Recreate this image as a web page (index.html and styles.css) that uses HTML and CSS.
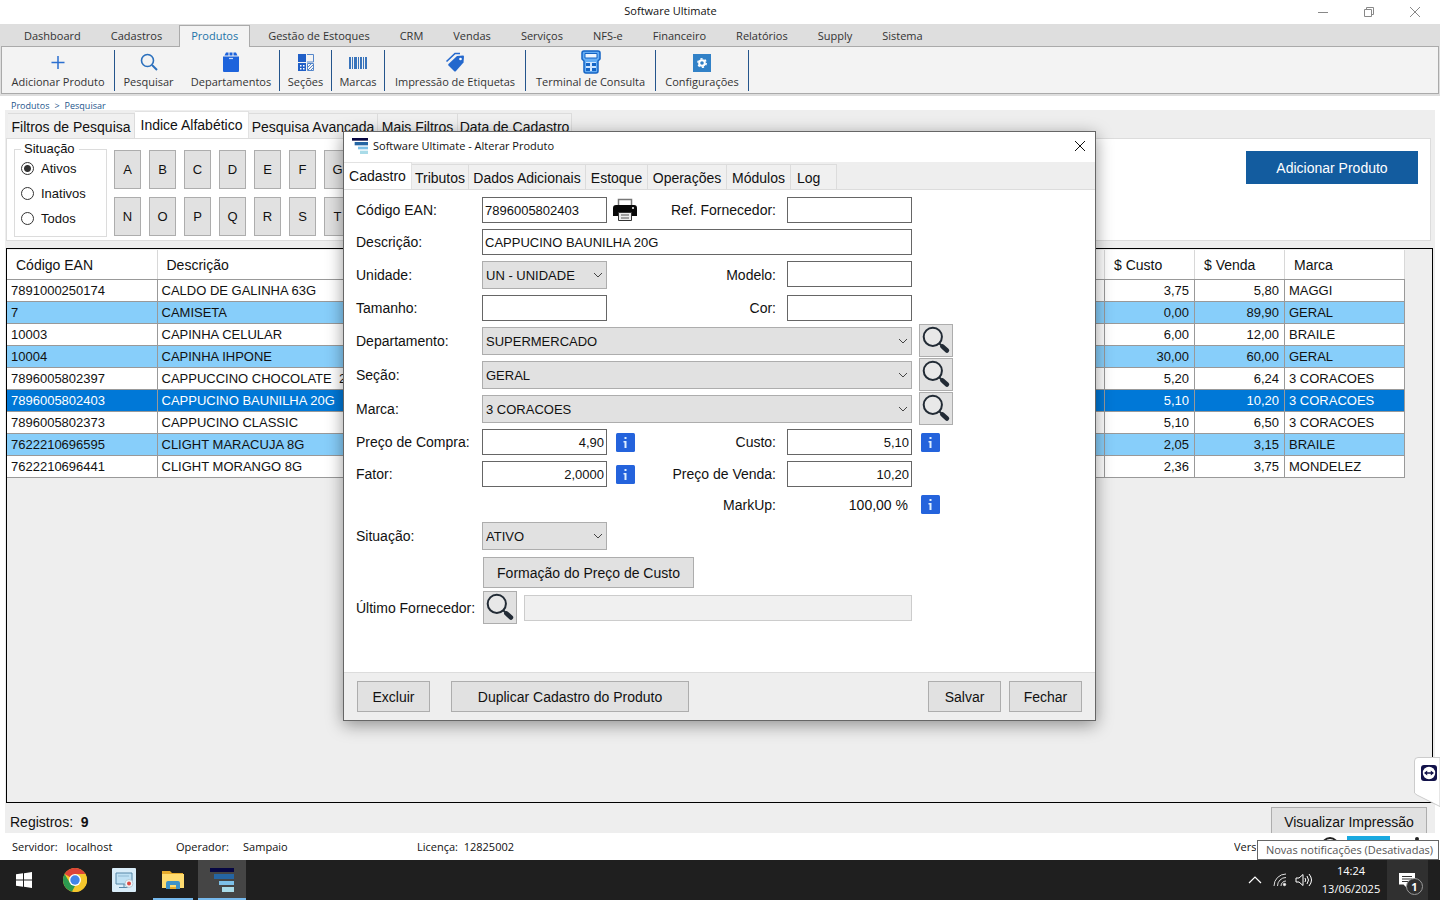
FILE: index.html
```html
<!DOCTYPE html>
<html lang="pt-BR">
<head>
<meta charset="utf-8">
<title>Software Ultimate</title>
<link rel="stylesheet" href="styles.css">
</head>
<body>
<svg class="defs" aria-hidden="true">
  <symbol id="logo" viewBox="0 0 24 24"><path fill="#060642" d="M0 0h24v4H0z"/><path fill="#2565a3" d="M4 6h20v5H4z"/><path fill="#7cc0e8" d="M9 13h15v4H9z"/><path fill="#a9dbe8" d="M12 19h12v5H12z"/></symbol>
  <symbol id="lens" viewBox="0 0 34 34"><circle cx="13.500" cy="13" r="10" fill="#e8e8e8" stroke="#222b35" stroke-width="2.200"/><path d="M20.500 20l2.500 2.500" stroke="#222b35" stroke-width="2"/><path d="M24 23.500l5 4.500" stroke="#222b35" stroke-width="5" stroke-linecap="round"/></symbol>
  <symbol id="info" viewBox="0 0 19 19"><rect width="19" height="19" rx="1.500" fill="#2463dc"/><path fill="#dff0ff" d="M8.500 4h2v2h-2zM7.500 8h3v7h-2V9.500h-1z"/></symbol>
  <symbol id="close" viewBox="0 0 12 12"><path d="M1 1l10 10M11 1L1 11" fill="none" stroke="currentColor"/></symbol>
</svg>
<header class="titlebar">
  <h1 class="app-title">Software Ultimate</h1>
  <div class="window-controls">
    <button aria-label="Minimizar"><svg width="12" height="12"><path d="M1 6.500h10" stroke="#888"/></svg></button>
    <button aria-label="Restaurar"><svg width="12" height="12" fill="none" stroke="#888"><path d="M1.500 3.500h7v7h-7zM3.500 3.500v-2h7v7h-2"/></svg></button>
    <button aria-label="Fechar janela"><svg width="12" height="12"><use href="#close"/></svg></button>
  </div>
</header>
<nav class="menu">
  <button>Dashboard</button><button>Cadastros</button><button class="active">Produtos</button><button>Gestão de Estoques</button><button>CRM</button><button>Vendas</button><button>Serviços</button><button>NFS-e</button><button>Financeiro</button><button>Relatórios</button><button>Supply</button><button>Sistema</button>
</nav>
<div class="ribbon-wrap">
<div class="ribbon">
  <button class="tool w-add sep"><svg viewBox="0 0 24 24"><path d="M12 6v13M5.500 12.500h13" stroke="#2b6fd0" stroke-width="1.500"/></svg>Adicionar Produto</button>
  <button class="tool w-search"><svg viewBox="0 0 24 24" fill="none" stroke="#2b70bd"><circle cx="10.500" cy="10.500" r="6" stroke-width="1.600"/><path d="M15 15l5 5" stroke-width="2"/></svg>Pesquisar</button>
  <button class="tool w-dept sep"><svg viewBox="0 0 24 24" fill="#1d63dc"><path d="M4 6.500h16v14.500a1 1 0 0 1-1 1H5a1 1 0 0 1-1-1zM5.500 5.500l1.500-3h2.500v3zM10.500 5.500v-3h3v3zM14.500 5.500v-3H17l1.500 3z"/><path d="M10 8.500h4" stroke="#c5dcff" stroke-width="1.200"/></svg>Departamentos</button>
  <button class="tool w-sec sep"><svg viewBox="0 0 24 24"><path fill="#205fc7" d="M4 4h8v8H4zM4 13h8v8H4z"/><path d="M6 15h1.500v1.500H6zM9 15h1.500v1.500H9zM6 18h1.500v1.500H6zM9 18h1.500v1.500H9z" fill="#fff"/><path d="M13 4.500h6.500V12H13M13.500 13.500h6v7h-6zM14 17l3-3M14 20l5-5M17 20l2-2" fill="none" stroke="#5486ca"/></svg>Seções</button>
  <button class="tool w-brand sep"><svg viewBox="0 0 24 24"><path fill="#3974bb" d="M3 7h2v12H3zM6 7h1v12H6zM8 7h3v12H8zM12 7h1v12h-1zM14 7h2v12h-2zM17 7h1v12h-1zM19 7h2v12h-2z"/></svg>Marcas</button>
  <button class="tool w-label sep"><svg viewBox="0 0 24 24"><path d="M3.500 11.500l8.500-8h5" fill="none" stroke="#2468cd" stroke-width="1.600"/><path fill="#2468cd" d="M5.500 14L14 6l6-.5q1 0 1 1l-.5 6L13 21q-1 1-2 0l-5.500-5.500q-.700-.700 0-1.500z"/><circle cx="17.500" cy="9" r="1.300" fill="#fff"/></svg>Impressão de Etiquetas</button>
  <button class="tool w-term sep"><svg viewBox="0 0 24 24"><path d="M5 1h14q2 0 2 2v6l-2 2v10q0 2-2 2H7q-2 0-2-2V11L3 9V3q0-2 2-2z" fill="#65adf4" stroke="#1464c5" stroke-width="1.500"/><path d="M6 3.500h12V8H6z" fill="#eef6ff" stroke="#1464c5"/><path d="M7 12h10v9H7z" fill="#cfe5ff"/><path fill="#1464c5" d="M7 13h4v3H7zM13 13h4v3h-4zM7 18h4v3H7zM13 18h4v3h-4z"/></svg>Terminal de Consulta</button>
  <button class="tool w-conf sep"><svg viewBox="0 0 24 24"><path fill="#3181c7" d="M3 4h18v18H3z"/><circle cx="12" cy="13" r="2.800" fill="none" stroke="#fff" stroke-width="2"/><circle cx="12" cy="13" r="4.200" fill="none" stroke="#fff" stroke-width="1.500" stroke-dasharray="2.200 2.200"/></svg>Configurações</button>
</div>
</div>
<nav class="crumb"><a href="#">Produtos</a> &gt; <a href="#">Pesquisar</a></nav>

<main class="page">
  <div class="tabs filter-tabs">
    <button>Filtros de Pesquisa</button><button class="active">Indice Alfabético</button><button>Pesquisa Avançada</button><button>Mais Filtros</button><button>Data de Cadastro</button>
  </div>
  <section class="filter">
    <fieldset class="status-set"><legend>Situação</legend>
      <label><input type="radio" name="sit" checked> Ativos</label>
      <label><input type="radio" name="sit"> Inativos</label>
      <label><input type="radio" name="sit"> Todos</label>
    </fieldset>
    <div class="letters">
      <button>A</button><button>B</button><button>C</button><button>D</button><button>E</button><button>F</button><button>G</button>
      <button>N</button><button>O</button><button>P</button><button>Q</button><button>R</button><button>S</button><button>T</button>
    </div>
    <button class="primary">Adicionar Produto</button>
  </section>
  <section class="grid-box">
    <table class="products">
      <colgroup><col class="c-ean"><col><col class="c-num"><col class="c-num"><col class="c-brand"></colgroup>
      <thead><tr><th>Código EAN</th><th>Descrição</th><th>$ Custo</th><th>$ Venda</th><th>Marca</th></tr></thead>
      <tbody>
        <tr><td>7891000250174</td><td>CALDO DE GALINHA 63G</td><td class="num">3,75</td><td class="num">5,80</td><td>MAGGI</td></tr>
        <tr><td>7</td><td>CAMISETA</td><td class="num">0,00</td><td class="num">89,90</td><td>GERAL</td></tr>
        <tr><td>10003</td><td>CAPINHA CELULAR</td><td class="num">6,00</td><td class="num">12,00</td><td>BRAILE</td></tr>
        <tr><td>10004</td><td>CAPINHA IHPONE</td><td class="num">30,00</td><td class="num">60,00</td><td>GERAL</td></tr>
        <tr><td>7896005802397</td><td>CAPPUCCINO CHOCOLATE&nbsp; 2</td><td class="num">5,20</td><td class="num">6,24</td><td>3 CORACOES</td></tr>
        <tr class="selected"><td>7896005802403</td><td>CAPPUCINO BAUNILHA 20G</td><td class="num">5,10</td><td class="num">10,20</td><td>3 CORACOES</td></tr>
        <tr><td>7896005802373</td><td>CAPPUCINO CLASSIC</td><td class="num">5,10</td><td class="num">6,50</td><td>3 CORACOES</td></tr>
        <tr><td>7622210696595</td><td>CLIGHT MARACUJA 8G</td><td class="num">2,05</td><td class="num">3,15</td><td>BRAILE</td></tr>
        <tr><td>7622210696441</td><td>CLIGHT MORANGO 8G</td><td class="num">2,36</td><td class="num">3,75</td><td>MONDELEZ</td></tr>
      </tbody>
    </table>
  </section>
  <footer class="page-foot"><span>Registros:&nbsp; <b>9</b></span><button class="btn preview">Visualizar Impressão</button></footer>
</main>

<div class="statusbar">
  <span class="s-server">Servidor:&nbsp;&nbsp; localhost</span><span class="s-oper">Operador:&nbsp;&nbsp;&nbsp;&nbsp; Sampaio</span><span>Licença:&nbsp; 12825002</span>
  <span class="s-right">Vers</span>
  <svg class="s-icons" width="110" height="26" aria-hidden="true"><circle cx="14" cy="12" r="8" fill="none" stroke="#222" stroke-width="2"/><path fill="#19a9e0" d="M31 2h43v20H31z"/><circle cx="101" cy="5" r="2" fill="#222"/></svg>
</div>

<footer class="taskbar">
  <button class="task" aria-label="Iniciar"><svg width="16" height="16" fill="#fff"><path d="M0 2.300L7 1.300v6.200H0zM8 1.200L16 0v7.500H8zM0 8.500h7v6.200L0 13.700zM8 8.500h8V16l-8-1.200z"/></svg></button>
  <button class="task" aria-label="Chrome"><svg width="24" height="24" viewBox="0 0 24 24"><circle cx="12" cy="12" r="12" fill="#f5c72c"/><path fill="#dc4437" d="M12 12L1.600 6A12 12 0 0 1 22.400 6H12z"/><path fill="#2c9a50" d="M1.600 6L7 15l5 3-3 5.600A12 12 0 0 1 1.600 6z"/><path fill="#f5c72c" d="M12 6h10.400A12 12 0 0 1 9.500 23.700L17 15z"/><circle cx="12" cy="12" r="6" fill="#fff"/><circle cx="12" cy="12" r="4.700" fill="#4285e8"/></svg></button>
  <button class="task" aria-label="Gravador"><svg width="24" height="24" viewBox="0 0 24 24"><rect width="24" height="24" rx="1" fill="#d9edf9"/><path d="M4 5h16v11H4zM12 16v3M7 19.500h9" fill="#bfe1f4" stroke="#5788a8"/><path d="M6 8h11" stroke="#8fb9d2"/><circle cx="17" cy="15.500" r="4" fill="#eef5f9" stroke="#b7cad4"/><circle cx="17" cy="15.500" r="2" fill="#dd4a42"/></svg></button>
  <button class="task open" aria-label="Explorador"><svg width="24" height="24" viewBox="0 0 24 24"><path fill="#e7ac2d" d="M1 3h8l2 2h11v5H1z"/><path fill="#ffdc70" d="M1 6h22v14H1z"/><path fill="#3f93c7" d="M5 21v-6q0-2 2-2h10q2 0 2 2v6h-4v-4H9v4z"/><path fill="#e7ac2d" d="M9 19h6v2H9z"/></svg></button>
  <button class="task open current" aria-label="Software Ultimate"><svg width="24" height="24"><use href="#logo"/></svg></button>
  <div class="tray">
    <svg width="14" height="10" fill="none" stroke="#fff"><path d="M1 8l6-6 6 6" stroke-width="1.200"/></svg>
    <svg class="wifi" width="14" height="14" fill="none" stroke="#ddd"><path d="M1 13A12 12 0 0 1 13 1M4.500 13A8.500 8.500 0 0 1 13 4.500M8 13a5 5 0 0 1 5-5"/><circle cx="11.500" cy="11.500" r="1.200" fill="#fff"/></svg>
    <svg width="18" height="14" fill="none" stroke="#fff"><path d="M1 5h3l4-3.500v11L4 9H1zM10 5q1.500 2 0 4M12 3q3 4 0 8M14 1q5 6 0 12"/></svg>
    <div class="clock"><span>14:24</span><span>13/06/2025</span></div>
    <button class="notify" aria-label="Notificações"><svg width="16" height="15"><path d="M0 0h16v11.500H8V15l-3.500-3.500H0z" fill="#fff"/><path d="M3 3.500h10M3 6h10M3 8.500h7" stroke="#333"/></svg><span class="badge">1</span></button>
  </div>
</footer>

<button class="remote" aria-label="TeamViewer"><svg width="26" height="50"><path d="M0.500 36V4Q.500 .500 4 .500h22v49L3 38z" fill="#fff" stroke="#ccc"/><rect x="7" y="8" width="16" height="16" rx="3" fill="#12124a"/><circle cx="15" cy="16" r="6.200" fill="#fff"/><path d="M10 16l3.200-2.500v1.700h3.600v-1.700L20 16l-3.200 2.500v-1.700h-3.600v1.700z" fill="#12124a"/></svg></button>
<div class="tooltip" role="tooltip">Novas notificações (Desativadas)</div>

<div class="dialog" role="dialog" aria-labelledby="dlg-title">
  <header class="dlg-title"><svg width="16" height="16"><use href="#logo"/></svg><h2 id="dlg-title">Software Ultimate - Alterar Produto</h2><button aria-label="Fechar diálogo"><svg width="12" height="12"><use href="#close"/></svg></button></header>
  <div class="tabs dlg-tabs">
    <button class="active">Cadastro</button><button>Tributos</button><button>Dados Adicionais</button><button>Estoque</button><button>Operações</button><button>Módulos</button><button class="last">Log</button>
  </div>
  <form class="form">
    <label for="ean">Código EAN:</label><input id="ean" value="7896005802403">
    <button type="button" class="icon-btn" aria-label="Imprimir"><svg width="24" height="24" viewBox="0 0 24 24"><path d="M5.500 1.500h13V8h-13z" fill="#fff" stroke="#777" stroke-width="1.500"/><path d="M3 7h18q3 0 3 3v8h-5v-3H5v3H0v-8q0-3 3-3z" fill="#080808"/><path d="M5.500 14.500h13v8h-13z" fill="#eee" stroke="#333"/><path d="M8 17h8M8 20h8" stroke="#555"/><circle cx="20" cy="10" r="1" fill="#fff"/></svg></button>
    <label class="second" for="ref">Ref. Fornecedor:</label><input id="ref">
    <label class="start" for="desc">Descrição:</label><input id="desc" class="wide" value="CAPPUCINO BAUNILHA 20G">
    <label class="start" for="un">Unidade:</label><select id="un"><option>UN - UNIDADE</option></select><label class="second" for="modelo">Modelo:</label><input id="modelo">
    <label class="start" for="tam">Tamanho:</label><input id="tam"><label class="second" for="cor">Cor:</label><input id="cor">
    <label class="start" for="dep">Departamento:</label><select id="dep" class="wide"><option>SUPERMERCADO</option></select><button type="button" class="btn lens" aria-label="Pesquisar departamento"><svg><use href="#lens"/></svg></button>
    <label class="start" for="sec">Seção:</label><select id="sec" class="wide"><option>GERAL</option></select><button type="button" class="btn lens" aria-label="Pesquisar seção"><svg><use href="#lens"/></svg></button>
    <label class="start" for="mar">Marca:</label><select id="mar" class="wide"><option>3 CORACOES</option></select><button type="button" class="btn lens" aria-label="Pesquisar marca"><svg><use href="#lens"/></svg></button>
    <label class="start" for="compra">Preço de Compra:</label><input id="compra" class="right" value="4,90"><button type="button" class="icon-btn info" aria-label="Sobre preço de compra"><svg width="19" height="19"><use href="#info"/></svg></button><label class="second" for="custo">Custo:</label><input id="custo" class="right" value="5,10"><button type="button" class="icon-btn info" aria-label="Sobre custo"><svg width="19" height="19"><use href="#info"/></svg></button>
    <label class="start" for="fator">Fator:</label><input id="fator" class="right" value="2,0000"><button type="button" class="icon-btn info" aria-label="Sobre fator"><svg width="19" height="19"><use href="#info"/></svg></button><label class="second" for="venda">Preço de Venda:</label><input id="venda" class="right" value="10,20">
    <label class="second" for="markup">MarkUp:</label><output id="markup">100,00 %</output><button type="button" class="icon-btn info" aria-label="Sobre markup"><svg width="19" height="19"><use href="#info"/></svg></button>
    <label class="start" for="sit">Situação:</label><select id="sit"><option>ATIVO</option></select>
    <button type="button" class="btn cost">Formação do Preço de Custo</button>
    <label class="start" for="forn">Último Fornecedor:</label><div class="supplier wide"><button type="button" class="btn lens" aria-label="Pesquisar fornecedor"><svg><use href="#lens"/></svg></button><input id="forn" disabled></div>
  </form>
  <footer class="dlg-foot"><button class="btn">Excluir</button><button class="btn dup">Duplicar Cadastro do Produto</button><button class="btn save">Salvar</button><button class="btn">Fechar</button></footer>
</div>
</body>
</html>
```
FILE: styles.css
```css
* { box-sizing: border-box; }
:root { --arial: "Liberation Sans", Arial, sans-serif; --ui: "Open Sans", "Noto Sans", sans-serif; }
body { margin: 0; min-height: 100vh; display: flex; flex-direction: column; position: relative; background: #fff; color: #111; font: 14px/18px var(--arial); }
button, input, select { font: inherit; color: inherit; margin: 0; }
button { padding: 0; border: 0; background: none; }
svg { display: block; }
.defs { position: absolute; width: 0; height: 0; }

.titlebar { height: 24px; display: grid; grid-template-columns: 1fr auto 1fr; align-items: center; padding: 0 19px 0 0; }
.app-title { margin: 0 80px 0 0; grid-column: 2; padding-bottom: 2px; font: 11px/20px var(--ui); white-space: nowrap; }
.window-controls { display: flex; gap: 34px; justify-content: flex-end; color: #888; }
.menu { height: 22px; display: flex; padding-left: 9px; background: #dedede; font: 11px/22px var(--ui); color: #333; }
.menu button { padding: 1px 15px 0; white-space: nowrap; }
.menu .active { height: 22px; margin-top: 1px; padding: 0 11px 2px; margin-inline: 2px 3px; border: 1px solid #aaa; border-bottom: 0; background: #f3f3f3; color: #2474a8; line-height: 20px; position: relative; z-index: 1; }
.ribbon-wrap { padding: 0 1px 2px; background: #dedede; }
.ribbon { height: 48px; display: flex; padding: 3px 0 2px; border: 1px solid #aaa; background: #f3f3f3; font: 11px/16px var(--ui); color: #333; }
.tool { flex: none; display: flex; flex-direction: column; align-items: center; white-space: nowrap; border-right: 1px solid transparent; }
.tool.sep { border-color: #24558c; }
.tool svg { width: 24px; height: 24px; flex: none; }
.w-add { width: 113px; } .w-search { width: 68px; } .w-dept { width: 97px; } .w-sec { width: 52px; }
.w-brand { width: 53px; } .w-label { width: 141px; } .w-term { width: 130px; } .w-conf { width: 93px; }
.crumb { height: 14px; padding: 3px 0 0 11px; font: 9px/14px var(--ui); color: #24558c; position: relative; z-index: 1; display: flex; gap: 5px; }
.crumb a { color: #24558c; text-decoration: none; }

.page { flex: 1; display: flex; flex-direction: column; margin: 0 5px 0 5px; background: #eee; }
.tabs { display: flex; align-items: flex-end; }
.tabs button { flex: none; height: 25px; padding-top: 2px; border: 1px solid #dcdcdc; border-width: 1px 1px 0 0; background: #f0f0f0; white-space: nowrap; }
.tabs .active { height: 27px; background: #fff; padding: 0 0 1px; border-color: #e2e2e2; }
.filter-tabs { height: 28px; padding-left: 3px; }
.filter-tabs button:nth-child(1) { width: 127px; }
.filter-tabs button:nth-child(2) { width: 114px; }
.filter-tabs button:nth-child(3) { width: 129px; }
.filter-tabs button:nth-child(4) { width: 80px; }
.filter-tabs button:nth-child(5) { width: 114px; }
.filter { height: 103px; display: flex; margin: 0 4px 7px 1px; padding: 4px 12px 4px 7px; border: 1px solid #dcdcdc; background: #fff; align-items: flex-start; }
.status-set { width: 93px; height: 94px; margin: 0; padding: 1px 0 0 6px; border: 1px solid #dcdcdc; display: flex; flex-direction: column; }
.status-set legend { padding: 0 4px 0 3px; line-height: 12px; font-size: 13px; }
.status-set label { height: 25px; display: flex; align-items: center; gap: 7px; font-size: 13px; }
.status-set input { appearance: none; width: 13px; height: 13px; border: 1px solid #333; border-radius: 50%; background: #fff; }
.status-set input:checked { background: radial-gradient(circle, #333 0 3px, #fff 4px); }
.letters { display: grid; grid-template-columns: repeat(7, 27px); grid-auto-rows: 39px; gap: 8px; margin: 7px 0 0 7px; }
.letters button { font-size: 13px; }
.letters button, .btn { background: #e1e1e1; border: 1px solid #adadad; }
.primary { width: 172px; height: 33px; margin: 8px 0 0 auto; background: #135c9f; color: #fff; }

.grid-box { flex: 1; margin: 0 2px 0 1px; padding: 1px 27px 0 0; border: 1px solid #000; }
.products { width: 100%; table-layout: fixed; border-collapse: collapse; font-size: 13px; background: #fff; }
.c-ean { width: 150px; } .c-num { width: 90px; } .c-brand { width: 120px; }
.products th { height: 29px; padding: 2px 8px 0 9px; border: 1px solid #d8d8d8; border-width: 0 1px 1px 0; border-bottom-color: #999; text-align: left; font-weight: 400; font-size: 14px; }
.products td { height: 22px; padding: 2px 5px 0 4px; border: 1px solid #999; border-left-width: 0; line-height: 16px; white-space: nowrap; }
.products tbody tr:nth-child(even) { background: #87cefa; }
.products tbody tr.selected { background: #0078d7; color: #fff; }
.products .num { text-align: right; }
.page-foot { height: 30px; display: flex; justify-content: space-between; align-items: flex-start; padding: 4px 8px 0 5px; overflow: hidden; }
.page-foot span { padding-top: 6px; }
.preview { width: 156px; height: 30px; }
.statusbar { height: 27px; display: flex; align-items: center; padding-left: 12px; font: 11px/18px var(--ui); }
.s-server { width: 164px; } .s-oper { width: 241px; }
.s-right { width: 22px; margin-left: auto; overflow: hidden; } .s-icons { margin: 0 14px 0 60px; }

.taskbar { height: 40px; display: flex; background: #1f1f1f; color: #fff; }
.task { width: 40px; height: 40px; margin-right: 9px; display: grid; place-items: center; }
.task:first-child { width: 48px; margin-right: 7px; }
.task.open { border-bottom: 2px solid #76b9ed; margin-right: 5px; padding-top: 2px; }
.task.current { width: 48px; background: #454545; }
.tray { margin-left: auto; display: flex; align-items: center; gap: 8px; font: 11px/18px var(--ui); }
.wifi { margin-left: 3px; }
.clock { width: 60px; display: flex; flex-direction: column; align-items: center; }
.notify { position: relative; width: 41px; height: 40px; margin: 0 12px 0 -2px; padding-left: 12px; background: #303030; }
.badge { position: absolute; left: 19px; top: 18px; width: 17px; height: 17px; border: 1px solid #999; border-radius: 50%; background: #303030; font: 700 11px/15px var(--ui); text-align: center; }
.remote { position: absolute; right: 0; bottom: 93px; }
.tooltip { position: absolute; right: 1px; bottom: 40px; padding: 0 5px 0 8px; border: 1px solid #666; background: #fff; color: #555; font: 11px/18px var(--ui); white-space: nowrap; }

.dialog { position: absolute; top: 131px; left: 0; right: 1px; margin: 0 auto; width: 753px; border: 1px solid #666; background: #fff; box-shadow: 0 4px 16px #0006; }
.dlg-title { height: 30px; display: flex; align-items: center; gap: 5px; padding: 0 9px 2px 8px; }
.dlg-title h2 { margin: 0; flex: 1; font: 11px/18px var(--ui); }
.dlg-tabs { height: 28px; background: #eee; border-bottom: 1px solid #dcdcdc; }
.dlg-tabs button:nth-child(1) { width: 68px; }
.dlg-tabs button:nth-child(2) { width: 57px; }
.dlg-tabs button:nth-child(3) { width: 117px; }
.dlg-tabs button:nth-child(4) { width: 62px; }
.dlg-tabs button:nth-child(5) { width: 79px; }
.dlg-tabs button:nth-child(6) { width: 64px; }
.dlg-tabs .last { width: 46px; padding-left: 6px; text-align: left; }
.form { display: grid; grid-template-columns: 126px 125px 30px 150px 125px 48px; gap: 6px 0; align-items: start; padding: 7px 12px 0; height: 482px; grid-template-rows: 26px 26px 28px 26px 28px 28px 28px 26px 26px 23px 28px 32px 28px; font-size: 13px; }
.form label { align-self: center; font-size: 14px; white-space: nowrap; }
.form .start { grid-column: 1; }
.form .second { grid-column: 4; justify-self: end; padding-right: 11px; }
.form input { width: 100%; height: 26px; padding: 1px 2px 0; border: 1px solid #666; background: #fff; border-radius: 0; }
.form .wide { grid-column: 2 / 6; }
.form .right { text-align: right; padding-right: 2px; }
.form select { width: 100%; height: 28px; padding: 1px 20px 0 3px; border: 1px solid #adadad; border-radius: 0; appearance: none; background: #e1e1e1 url("data:image/svg+xml,%3Csvg xmlns='http://www.w3.org/2000/svg' width='10' height='6'%3E%3Cpath d='M1 1l4 4 4-4' fill='none' stroke='%23444'/%3E%3C/svg%3E") no-repeat right 3px center; }
.icon-btn { align-self: center; margin-left: 6px; justify-self: start; }
.icon-btn.info { margin-left: 9px; }
.lens { width: 34px; height: 33px; margin: -3px 0 -3px 7px; }
.lens svg { width: 32px; height: 31px; }
.form output { text-align: right; align-self: center; padding-right: 4px; font-size: 14px; }
.form .cost { grid-column: 2 / 5; width: 211px; height: 31px; margin: 1px 0 0 1px; font-size: 14px; }
.supplier { display: flex; align-items: center; gap: 7px; }
.supplier .lens { flex: none; margin-left: 1px; }
.form .supplier input { border-color: #ccc; background: #f0f0f0; }
.dlg-foot { height: 48px; display: flex; align-items: flex-start; gap: 8px; padding: 8px 13px 0; border-top: 1px solid #dcdcdc; background: #eee; }
.dlg-foot .btn { width: 73px; height: 31px; }
.dlg-foot .dup { width: 238px; margin-left: 13px; }
.dlg-foot .save { margin-left: auto; }
```
